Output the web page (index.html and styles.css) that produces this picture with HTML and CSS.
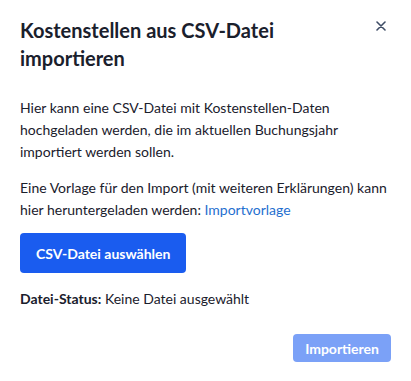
FILE: index.html
```html
<!DOCTYPE html>
<html lang="de">
<head>
    <meta charset="UTF-8">
    <meta name="viewport" content="width=device-width, initial-scale=1.0">
    <title>Kostenstellen importieren</title>
    <link rel="stylesheet" href="styles.css">
</head>
<body>
    <div class="modal">
        <div class="modal-header">
            <h2>Kostenstellen aus CSV-Datei importieren</h2>
            <button class="close" aria-label="Schließen">
                <svg width="10" height="10" viewBox="0 0 10 10">
                    <path d="M1 1 L9 9 M9 1 L1 9" stroke="#3f4d66" stroke-width="1.6" stroke-linecap="round"/>
                </svg>
            </button>
        </div>
        <div class="modal-body">
            <p>Hier kann eine CSV-Datei mit Kostenstellen-Daten hochgeladen werden, die im aktuellen Buchungsjahr importiert werden sollen.</p>
            <p>Eine Vorlage für den Import (mit weiteren Erklärungen) kann hier heruntergeladen werden: <a href="#">Importvorlage</a></p>
            <button class="btn-primary">CSV-Datei auswählen</button>
            <div class="status"><strong>Datei-Status:</strong> Keine Datei ausgewählt</div>
        </div>
        <div class="modal-footer">
            <button class="btn-import" disabled>Importieren</button>
        </div>
    </div>
</body>
</html>
```

FILE: styles.css
```css
body {
    margin: 0;
    font-family: Lato, "Noto Sans", sans-serif;
    color: #1a202c;
    background-color: #fff;
}
.modal {
    width: 411px;
    height: 381px;
    box-sizing: border-box;
    padding: 16px 20px 19px;
    display: flex;
    flex-direction: column;
}
.modal-header {
    display: flex;
    justify-content: space-between;
    align-items: flex-start;
}
.modal-header h2 {
    margin: 0;
    font-size: 20px;
    line-height: 28px;
    font-weight: 700;
    color: #1a202c;
    width: 300px;
}
.close {
    border: none;
    background: none;
    padding: 0;
    margin: 0;
    width: 20px;
    height: 20px;
    display: flex;
    align-items: center;
    justify-content: center;
    cursor: pointer;
}
.modal-body {
    padding-top: 25px;
    font-size: 14px;
    line-height: 22px;
}
.modal-body p {
    margin: 0 0 14px;
}
.modal-body a {
    color: #1f6fcf;
    text-decoration: none;
}
.btn-primary {
    display: block;
    margin-top: -2px;
    height: 40px;
    padding: 0 16px;
    border: none;
    border-radius: 4px;
    background-color: #1a5cef;
    color: #fff;
    font-family: inherit;
    font-size: 14px;
    font-weight: 700;
}
.status {
    margin-top: 15px;
}
.modal-footer {
    margin-top: auto;
    display: flex;
    justify-content: flex-end;
}
.btn-import {
    height: 28px;
    padding: 0 12px;
    border: none;
    border-radius: 4px;
    background-color: #7ba1f7;
    color: #fff;
    font-family: inherit;
    font-size: 14px;
    font-weight: 700;
}
```
